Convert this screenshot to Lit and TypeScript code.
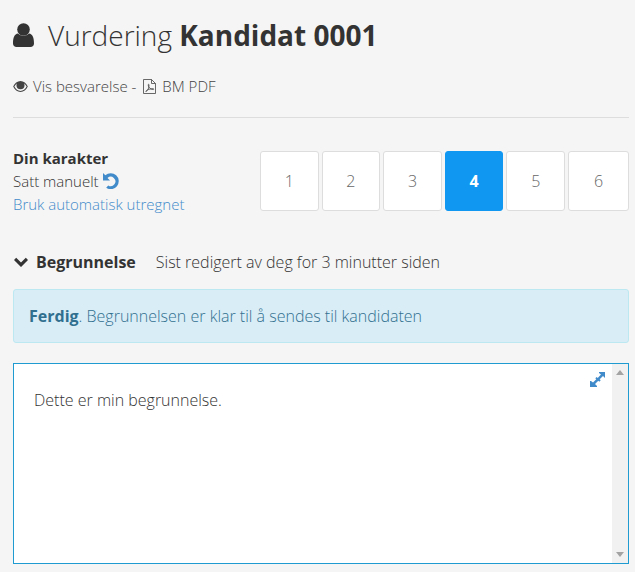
import { LitElement, html, css } from "lit";
import { customElement } from "lit/decorators.js";

@customElement("app-root")
export class AppRoot extends LitElement {
  static styles = css`
    :host {
      display: block;
      width: 635px;
      height: 572px;
      overflow: hidden;
      box-sizing: border-box;
      background: #f5f5f5;
      padding: 0 6px 0 13px;
      font-family: "Open Sans", sans-serif;
      font-weight: 300;
      color: #333;
      font-size: 15px;
    }
    svg { display: block; fill: currentColor; flex: none; }
    .title {
      display: flex;
      align-items: center;
      height: 34px;
      margin-top: 18px;
      font-size: 28px;
      line-height: 34px;
      white-space: pre;
    }
    .title svg { margin-right: 14px; }
    b { font-weight: 700; }
    .links {
      display: flex;
      align-items: center;
      gap: 5px;
      height: 20px;
      margin-top: 24px;
      color: #444;
    }
    .links .pdf { margin-left: 2px; margin-right: 1px; }
    hr {
      border: 0;
      border-top: 1px solid #ddd;
      margin: 21px 0 33px;
    }
    .grade { display: flex; justify-content: space-between; height: 60px; }
    .info { line-height: 23px; margin-top: -4px; }
    .info .head { font-weight: 700; }
    .manual { display: flex; align-items: center; gap: 4px; }
    .manual svg { color: #428bca; margin-top: -2px; }
    .auto { color: #428bca; }
    .btns { display: flex; gap: 3px; }
    .btn {
      box-sizing: border-box;
      width: 58.6px;
      height: 60px;
      display: flex;
      align-items: center;
      justify-content: center;
      background: #fff;
      border: 1px solid #ddd;
      border-radius: 3px;
      font-size: 16px;
      color: #666;
    }
    .btn:last-child { width: 61px; }
    .btn.on {
      background: #0f97f2;
      border-color: #0f97f2;
      color: #fff;
      font-weight: 700;
    }
    .row {
      display: flex;
      align-items: center;
      height: 24px;
      margin-top: 39px;
      font-size: 16px;
    }
    .row svg { margin-right: 8px; margin-left: 1px; }
    .row b { margin-right: 20px; }
    .alert {
      box-sizing: border-box;
      height: 54px;
      margin-top: 15px;
      padding: 0 15px;
      display: flex;
      align-items: center;
      background: #d9edf7;
      border: 1px solid #bce8f1;
      border-radius: 3px;
      color: #31708f;
      font-size: 16px;
      white-space: pre;
    }
    .editor {
      box-sizing: border-box;
      display: flex;
      height: 201px;
      margin-top: 20px;
      background: #fff;
      border: 1px solid #1f9bd1;
    }
    .content { flex: 1; position: relative; padding: 24px 20px; font-size: 16px; line-height: 24px; color: #333; }
    .expand { position: absolute; top: 8px; right: 7px; color: #428bca; }
    .scroll {
      width: 16px;
      background: #f1f1f1;
      display: flex;
      flex-direction: column;
      justify-content: space-between;
      align-items: center;
      padding: 6px 0;
    }
    .scroll svg { color: #a3a3a3; }
  `;

  render() {
    return html`
      <div class="title">
        <svg width="21" height="24" viewBox="0 0 21 24"><circle cx="10.500" cy="6.500" r="6.300"/><path d="M0 20.500c0-6 1.500-9.500 5-10 1.500 1.500 3.500 2.400 5.500 2.400s4-.9 5.500-2.400c3.500.5 5 4 5 10 0 2.200-1.500 3.500-3.500 3.500h-14C1.500 24 0 22.700 0 20.500z"/></svg>
        <span>Vurdering <b>Kandidat 0001</b></span>
      </div>
      <div class="links">
        <svg width="15" height="11" viewBox="0 0 16 12"><path fill-rule="evenodd" d="M8 0c3.500 0 6.300 2.500 8 6-1.700 3.500-4.500 6-8 6S1.700 9.500 0 6c1.700-3.500 4.500-6 8-6zM1.300 6C2.800 8.800 5.100 10.800 8 10.800s5.200-2 6.700-4.800c-.8-1.400-1.800-2.600-3-3.500.4.600.7 1.300.7 2.100a4.400 4.400 0 0 1-8.800 0c0-.8.200-1.500.7-2.100-1.200.9-2.200 2.100-3 3.500z"/></svg>
        <span>Vis besvarelse -</span>
        <svg class="pdf" width="13" height="15" viewBox="0 0 13 15"><path fill="none" stroke="currentColor" stroke-width=".8" d="M.5.500h8l4 4v10H.5zM8.500.500v4h4M3 12.500c2-1 3-3.500 3-6.500 0-1-.8-1-.8 0 0 2 2 4.500 5 4.500.8 0 .8-.8 0-.8-3 0-7 1.300-7.400 2.800z"/></svg>
        <span>BM PDF</span>
      </div>
      <hr />
      <div class="grade">
        <div class="info">
          <div class="head">Din karakter</div>
          <div class="manual">Satt manuelt
            <svg width="16" height="16" viewBox="0 0 16 16"><path d="M0 0l2.300 2.300A8 8 0 1 1 3.200 14.800l2-2.400a4.700 4.700 0 1 0-.7-7.500l2.500 2.500H0z"/></svg>
          </div>
          <div class="auto">Bruk automatisk utregnet</div>
        </div>
        <div class="btns">
          ${[1, 2, 3, 4, 5, 6].map(
            (n) => html`<div class="btn ${n === 4 ? "on" : ""}">${n}</div>`
          )}
        </div>
      </div>
      <div class="row">
        <svg width="14" height="10" viewBox="0 0 14 10"><path d="M7 10L0 3l2.200-2.200L7 5.600 11.800.8 14 3z"/></svg>
        <b>Begrunnelse</b>
        <span>Sist redigert av deg for 3 minutter siden</span>
      </div>
      <div class="alert"><b>Ferdig</b>. Begrunnelsen er klar til å sendes til kandidaten</div>
      <div class="editor">
        <div class="content">
          Dette er min begrunnelse.
          <svg class="expand" width="15" height="15" viewBox="0 0 15 15"><path d="M9 0h6v6l-2-2-3.300 3.300 1 1-1.400 1.400-1-1L5 12l2 2v1H0V9h1l2 1.600 3.300-3.300-1-1L6.700 4.900l1 1L11 2.500 9 1z"/></svg>
        </div>
        <div class="scroll">
          <svg width="8" height="5" viewBox="0 0 8 5"><path d="M4 0l4 5H0z"/></svg>
          <svg width="8" height="5" viewBox="0 0 8 5"><path d="M4 5L0 0h8z"/></svg>
        </div>
      </div>
    `;
  }
}
